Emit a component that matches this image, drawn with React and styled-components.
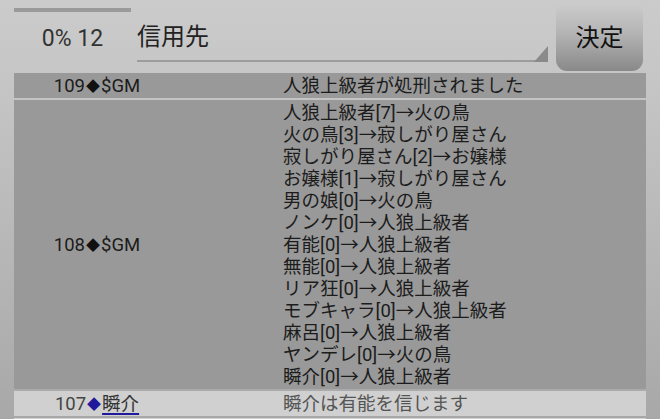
import styled, { createGlobalStyle } from "styled-components";

const Global = createGlobalStyle`
  html, body {
    margin: 0;
    height: 100%;
    overflow: hidden;
  }
  body {
    background: linear-gradient(#cbcbcb 0%, #c6c6c6 18%, #a8a8a8 100%);
    font-family: Roboto, "Noto Sans CJK JP", sans-serif;
    color: #1c1c1c;
  }
`;

const Page = styled.div`
  width: 660px;
  height: 419px;
  overflow: hidden;
`;

const Header = styled.div`
  display: flex;
  align-items: flex-start;
  height: 73px;
  padding-left: 14px;
`;

const Counter = styled.div`
  width: 117px;
  display: flex;
  flex-direction: column;
  align-items: center;
`;

const Bar = styled.div`
  align-self: stretch;
  margin-top: 8px;
  height: 4px;
  background: #9a9a9a;
`;

const CounterText = styled.div`
  margin-top: 14px;
  font-size: 23px;
  line-height: 26px;
  color: #333;
`;

const Select = styled.div`
  position: relative;
  margin-left: 6px;
  width: 411px;
  height: 52px;
  padding-top: 8px;
  border-bottom: 2px solid #9c9c9c;
  display: flex;
  align-items: center;
  font-size: 24px;
  color: #222;

  &::after {
    content: "";
    position: absolute;
    right: 0;
    bottom: -2px;
    width: 14px;
    height: 16px;
    background: #8a8a8a;
    clip-path: polygon(100% 0, 100% 100%, 0 100%);
  }
`;

const Button = styled.div`
  margin-left: 8px;
  margin-top: 2px;
  width: 87px;
  height: 69px;
  border-radius: 11px;
  background: linear-gradient(#cdcdcd 0%, #b4b4b4 45%, #898989 100%);
  display: flex;
  align-items: center;
  justify-content: center;
  font-size: 24px;
  color: #111;
  padding-bottom: 3px;
  box-sizing: border-box;
`;

const Log = styled.div`
  margin-left: 14px;
  width: 632px;
  display: flex;
  flex-direction: column;
  gap: 2px;
`;

const Row = styled.div`
  display: grid;
  grid-template-columns: 166px 1fr;
  align-items: center;
  background: ${(p) => (p.$gm ? "#999999" : "#d0d0d0")};
  padding: 2px 0 1px;
  font-size: 18.5px;
  line-height: 22px;
`;

const Name = styled.div`
  text-align: center;
  color: ${(p) => (p.$gm ? "#1c1c1c" : "#444")};
`;

const Mark = styled.span`
  font-size: 14px;
  vertical-align: 1px;
  padding: 0 1px;
  color: ${(p) => (p.$gm ? "#111" : "#1f1a9c")};
`;

const PlayerLink = styled.span`
  color: #333;
  text-decoration: underline;
  text-decoration-color: #1f1a9c;
  text-decoration-thickness: 2px;
  text-underline-offset: 3px;
`;

const Message = styled.div`
  padding-left: 103px;
  color: ${(p) => (p.$gm ? "#1c1c1c" : "#555")};
`;

const votes = [
  "人狼上級者[7]→火の鳥",
  "火の鳥[3]→寂しがり屋さん",
  "寂しがり屋さん[2]→お嬢様",
  "お嬢様[1]→寂しがり屋さん",
  "男の娘[0]→火の鳥",
  "ノンケ[0]→人狼上級者",
  "有能[0]→人狼上級者",
  "無能[0]→人狼上級者",
  "リア狂[0]→人狼上級者",
  "モブキャラ[0]→人狼上級者",
  "麻呂[0]→人狼上級者",
  "ヤンデレ[0]→火の鳥",
  "瞬介[0]→人狼上級者",
];

export default function App() {
  return (
    <Page>
      <Global />
      <Header>
        <Counter>
          <Bar />
          <CounterText>0% 12</CounterText>
        </Counter>
        <Select>信用先</Select>
        <Button>決定</Button>
      </Header>
      <Log>
        <Row $gm>
          <Name $gm>109<Mark $gm>◆</Mark>$GM</Name>
          <Message $gm>人狼上級者が処刑されました</Message>
        </Row>
        <Row $gm>
          <Name $gm>108<Mark $gm>◆</Mark>$GM</Name>
          <Message $gm>
            {votes.map((v) => (
              <div key={v}>{v}</div>
            ))}
          </Message>
        </Row>
        <Row>
          <Name>107<Mark>◆</Mark><PlayerLink>瞬介</PlayerLink></Name>
          <Message>瞬介は有能を信じます</Message>
        </Row>
        <Row>
          <Name>&nbsp;</Name>
          <Message>&nbsp;</Message>
        </Row>
      </Log>
    </Page>
  );
}
